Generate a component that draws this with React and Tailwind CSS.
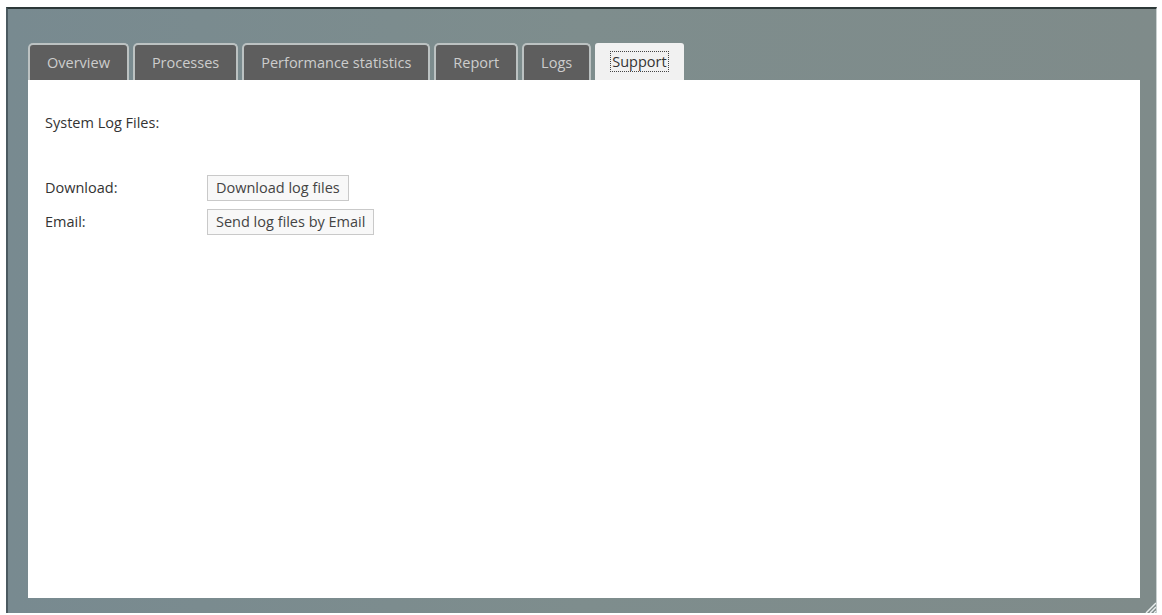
import React, { useState } from 'react';

const tabs = ['Overview', 'Processes', 'Performance statistics', 'Report', 'Logs', 'Support'];

const Tab = ({ label, active, onClick }) => {
    if (active) {
        return (
            <button
                onClick={onClick}
                className="h-[37px] px-[15px] bg-[#f1f1f1] text-[#333] text-[14.5px] rounded-t-[3px]"
            >
                <span className="border border-dotted border-[#444] px-[1px]">{label}</span>
            </button>
        );
    }
    return (
        <button
            onClick={onClick}
            className="h-[37px] px-[17px] bg-[#5e5e5e] text-[#cdcdcd] text-[14.5px] border-2 border-b-0 border-[#bcc2c2] rounded-t-[5px]"
        >
            {label}
        </button>
    );
};

const Row = ({ label, action }) => (
    <div className="flex items-center">
        <div className="w-[162px] text-[14.5px] text-[#333]">{label}</div>
        <button className="h-[26px] px-[8px] text-[14.5px] text-[#444] bg-[#f8f8f8] border border-[#c9c9c9]">
            {action}
        </button>
    </div>
);

export default function App() {
    const [activeTab, setActiveTab] = useState('Support');

    return (
        <div className="w-[1162px] h-[615px] bg-white pt-[7px] pl-[6px] overflow-hidden" style={{ fontFamily: '"Open Sans", "Noto Sans", sans-serif' }}>
            <div className="relative w-[1151px] h-[606px] bg-gradient-to-r from-[#788a90] via-[#7e8d8d] to-[#7f8b8a] border-t-2 border-l-2 border-r border-t-[#2c3838] border-l-[#4b5a60] border-r-[#c9d0d0] flex flex-col pt-[34px] pl-[20px] pr-[16px] pb-[15px]">
                {/* Tab strip */}
                <div className="flex items-end gap-[4px]">
                    {tabs.map((t) => (
                        <Tab key={t} label={t} active={t === activeTab} onClick={() => setActiveTab(t)} />
                    ))}
                </div>

                {/* Panel */}
                <div className="flex-1 bg-white pl-[17px] pt-[32px]">
                    <div className="text-[14.5px] text-[#333]">System Log Files:</div>
                    <div className="mt-[41px] flex flex-col gap-[8px]">
                        <Row label="Download:" action="Download log files" />
                        <Row label="Email:" action="Send log files by Email" />
                    </div>
                </div>

                {/* Resize grip */}
                <svg className="absolute right-0 bottom-0" width="12" height="12" viewBox="0 0 12 12">
                    <path d="M12 2 L2 12 M12 6 L6 12 M12 10 L10 12" stroke="#e8eded" strokeWidth="1.5" />
                </svg>
            </div>
        </div>
    );
}
